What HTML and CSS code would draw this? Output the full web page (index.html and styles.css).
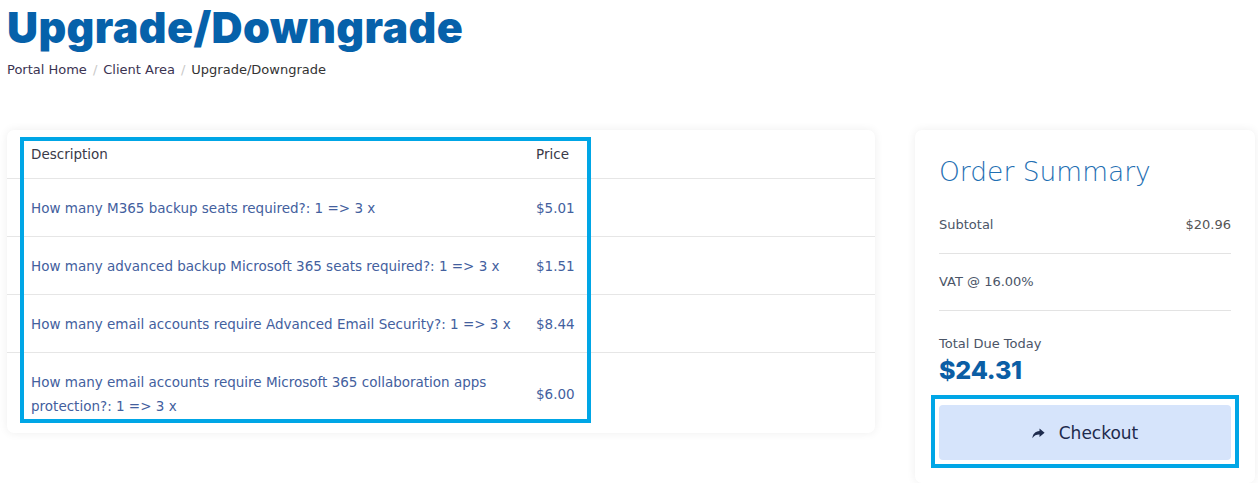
FILE: index.html
```html
<!DOCTYPE html>
<html>
<head>
<meta charset="utf-8">
<link rel="stylesheet" href="styles.css">
</head>
<body>
<div class="page">
  <h1 class="title">Upgrade/Downgrade</h1>
  <nav class="crumbs">
    <a class="crumb-link">Portal Home</a><span class="sep">/</span><a class="crumb-link">Client Area</a><span class="sep">/</span><span class="crumb-current">Upgrade/Downgrade</span>
  </nav>
  <div class="main">
    <section class="card items">
      <div class="row head">
        <div class="desc">Description</div>
        <div class="price">Price</div>
      </div>
      <div class="row">
        <div class="desc link">How many M365 backup seats required?: 1 =&gt; 3 x</div>
        <div class="price link">$5.01</div>
      </div>
      <div class="row">
        <div class="desc link">How many advanced backup Microsoft 365 seats required?: 1 =&gt; 3 x</div>
        <div class="price link">$1.51</div>
      </div>
      <div class="row">
        <div class="desc link">How many email accounts require Advanced Email Security?: 1 =&gt; 3 x</div>
        <div class="price link">$8.44</div>
      </div>
      <div class="row last">
        <div class="desc link">How many email accounts require Microsoft 365 collaboration apps protection?: 1 =&gt; 3 x</div>
        <div class="price link">$6.00</div>
      </div>
      <div class="mark mark-table"></div>
    </section>
    <aside class="card summary">
      <h2 class="sum-title">Order Summary</h2>
      <div class="sum-row"><span>Subtotal</span><span class="val">$20.96</span></div>
      <div class="sum-row"><span>VAT @ 16.00%</span><span class="val"></span></div>
      <div class="total">
        <div class="total-label">Total Due Today</div>
        <div class="total-amount">$24.31</div>
      </div>
      <button class="checkout">
        <svg class="share" width="13" height="11" viewBox="0 0 13 11"><path d="M7.5 0.5 L12.6 4.8 L7.5 9.1 V6.6 C4.6 6.5 2.3 7.3 0.4 10.2 C0.9 6 3.2 3.5 7.5 3.1 Z" fill="#1e2b4d"/></svg>
        <span>Checkout</span>
      </button>
      <div class="mark mark-btn"></div>
    </aside>
  </div>
</div>
</body>
</html>
```
FILE: styles.css
```css
* { box-sizing: border-box; }
html, body { margin: 0; padding: 0; background: #fff; }
body { font-family: "DejaVu Sans", "Open Sans", sans-serif; color: #333; }
.page { padding: 0 3px 0 7px; }
.title {
  margin: 0;
  padding-top: 4px;
  font-family: Inter, sans-serif;
  font-weight: 900;
  font-size: 43px;
  line-height: 46px;
  letter-spacing: 0.4px;
  color: #0661aa;
}
.crumbs { margin-top: 10px; font-size: 13px; line-height: 20px; color: #333; }
.crumb-link { color: #3b3452; }
.sep { color: #c8c8c8; padding: 0 6px; }
.crumb-current { color: #333; }
.main { display: flex; align-items: flex-start; gap: 40px; margin-top: 50px; }
.card {
  position: relative;
  background: #fff;
  border-radius: 7px;
  box-shadow: 0 0 10px rgba(0,0,0,0.07);
}
.items { width: 868px; }
.row {
  display: grid;
  grid-template-columns: 505px 1fr;
  align-items: center;
  padding: 17px 24px 16px;
  border-top: 1px solid #e6e6e6;
  font-size: 13.5px;
  line-height: 24px;
}
.row.head { border-top: none; padding: 12px 24px 12px; color: #3a3a48; }
.row.last { padding-bottom: 15px; }
.link { color: #43609e; }
.desc { padding-right: 16px; }
.mark { position: absolute; border: 4px solid #00a6e6; pointer-events: none; }
.mark-table { left: 13px; top: 7px; width: 571px; height: 286px; }
.summary { width: 340px; padding: 24px 24px 23px; }
.sum-title {
  margin: 0 0 24px;
  font-family: "DejaVu Sans", sans-serif;
  font-weight: 300;
  font-size: 26.5px;
  line-height: 36px;
  color: #1f6fb3;
}
.sum-row {
  display: flex;
  justify-content: space-between;
  padding: 18px 0;
  line-height: 20px;
  font-size: 13px;
  color: #4b5567;
  border-bottom: 1px solid #e3e3e3;
}
.sum-row:first-of-type { padding-top: 1px; }
.val { color: #555; }
.total { padding-top: 23px; }
.total-label { font-size: 13px; line-height: 20px; color: #4b5567; }
.total-amount { font-family: Inter, sans-serif; font-weight: 800; font-size: 25px; line-height: 32px; letter-spacing: -0.2px; color: #0b5ea5; }
.checkout {
  margin-top: 19px;
  width: 100%;
  height: 55px;
  border: none;
  border-radius: 4px;
  background: #d6e4fb;
  display: flex;
  align-items: center;
  justify-content: center;
  gap: 14px;
  font-family: "DejaVu Sans", sans-serif;
  font-size: 17px;
  color: #1e2b4d;
}
.share { margin-top: 1px; }
.mark-btn { left: 16px; top: 265px; width: 308px; height: 73px; }
```
